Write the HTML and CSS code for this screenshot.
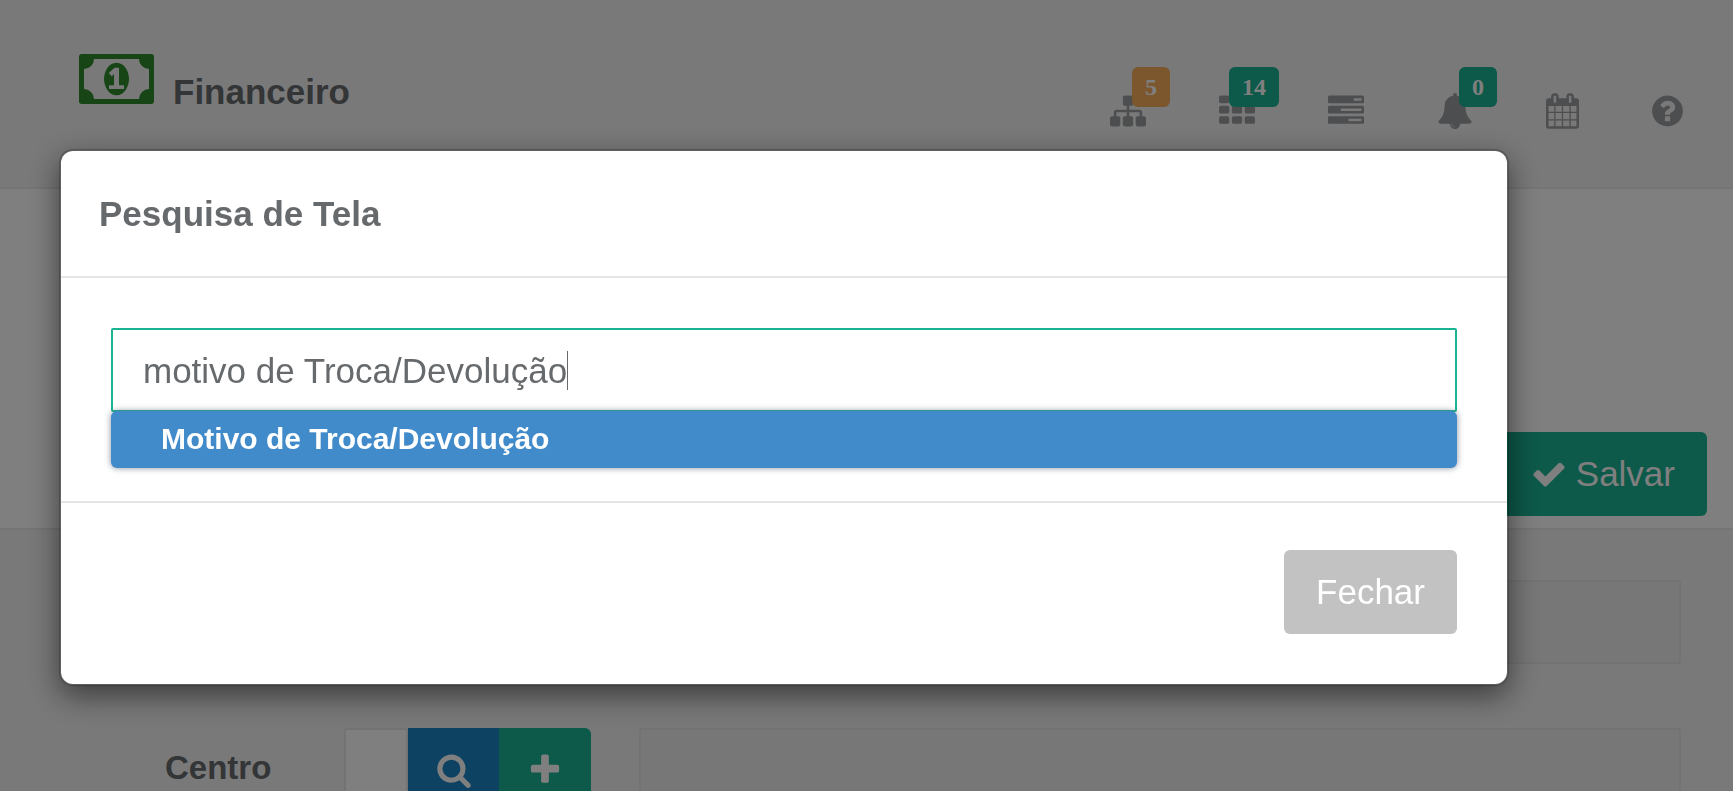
FILE: index.html
```html
<!DOCTYPE html>
<html lang="pt-br">
  <head>
    <meta charset="UTF-8" />
    <meta name="viewport" content="width=device-width, initial-scale=1.0" />
    <title>Financeiro</title>
    <link rel="stylesheet" href="styles.css">
  </head>
  <body>
    <header class="topbar">
      <h1 class="brand">
        <svg class="brand-icon" viewBox="0 256 1920 1280" aria-hidden="true"><path d="M768 1152h384v-96h-128v-448h-114l-148 137 77 80q42-37 55-57h2v288h-128v96zm512-256q0 70-21 142t-59.5 134-101.5 101-138 39-138-39-101.5-101-59.5-134-21-142 21-142 59.5-134 101.5-101 138-39 138 39 101.5 101 59.5 134 21 142zm512 256v-512q-106 0-181-75t-75-181h-1152q0 106-75 181t-181 75v512q106 0 181 75t75 181h1152q0-106 75-181t181-75zm128-832v1152q0 26-19 45t-45 19h-1792q-26 0-45-19t-19-45v-1152q0-26 19-45t45-19h1792q26 0 45 19t19 45z"/></svg>
        Financeiro
      </h1>
      <nav class="top-links">
        <a href="#" aria-label="Estrutura">
          <svg class="icon" viewBox="0 0 1792 1792"><path d="M1792 1248v320q0 40-28 68t-68 28h-320q-40 0-68-28t-28-68v-320q0-40 28-68t68-28h96v-192h-512v192h96q40 0 68 28t28 68v320q0 40-28 68t-68 28h-320q-40 0-68-28t-28-68v-320q0-40 28-68t68-28h96v-192h-512v192h96q40 0 68 28t28 68v320q0 40-28 68t-68 28h-320q-40 0-68-28t-28-68v-320q0-40 28-68t68-28h96v-192q0-52 38-90t90-38h512v-192h-96q-40 0-68-28t-28-68v-320q0-40 28-68t68-28h320q40 0 68 28t28 68v320q0 40-28 68t-68 28h-96v192h512q52 0 90 38t38 90v192h96q40 0 68 28t28 68z"/></svg>
          <span class="badge badge-warning">5</span>
        </a>
        <a href="#" aria-label="Telas">
          <svg class="icon" viewBox="0 0 1792 1792">
            <rect x="0" y="128" width="512" height="384" rx="96"/>
            <rect x="640" y="128" width="512" height="384" rx="96"/>
            <rect x="1280" y="128" width="512" height="384" rx="96"/>
            <rect x="0" y="640" width="512" height="384" rx="96"/>
            <rect x="640" y="640" width="512" height="384" rx="96"/>
            <rect x="1280" y="640" width="512" height="384" rx="96"/>
            <rect x="0" y="1152" width="512" height="384" rx="96"/>
            <rect x="640" y="1152" width="512" height="384" rx="96"/>
            <rect x="1280" y="1152" width="512" height="384" rx="96"/>
          </svg>
          <span class="badge badge-wide">14</span>
        </a>
        <a href="#" aria-label="Tarefas">
          <svg class="icon" viewBox="0 0 1792 1792"><path d="M1024 1408h640v-128h-640v128zm-384-512h1024v-128h-1024v128zm640-512h384v-128h-384v128zm512 832v256q0 26-19 45t-45 19h-1664q-26 0-45-19t-19-45v-256q0-26 19-45t45-19h1664q26 0 45 19t19 45zm0-512v256q0 26-19 45t-45 19h-1664q-26 0-45-19t-19-45v-256q0-26 19-45t45-19h1664q26 0 45 19t19 45zm0-512v256q0 26-19 45t-45 19h-1664q-26 0-45-19t-19-45v-256q0-26 19-45t45-19h1664q26 0 45 19t19 45z"/></svg>
        </a>
        <a href="#" aria-label="Alertas">
          <svg class="icon" viewBox="0 0 1792 1792"><path d="M912 1696q0-16-16-16-59 0-101.5-42.5t-42.5-101.5q0-16-16-16t-16 16q0 73 51.5 124.5t124.5 51.5q16 0 16-16zm816-288q0 52-38 90t-90 38h-448q0 106-75 181t-181 75-181-75-75-181h-448q-52 0-90-38t-38-90q50-42 91-88t85-119.5 74.5-158.5 50-206 19.5-260q0-152 117-282.5t307-158.5q-8-19-8-39 0-40 28-68t68-28 68 28 28 68q0 20-8 39 190 28 307 158.5t117 282.5q0 139 19.5 260t50 206 74.5 158.5 85 119.5 91 88z"/></svg>
          <span class="badge">0</span>
        </a>
        <a href="#" aria-label="Agenda">
          <svg class="icon icon-calendar" viewBox="64 0 1664 1792"><path d="M192 1664h288v-288h-288v288zm352 0h320v-288h-320v288zm-352-352h288v-320h-288v320zm352 0h320v-320h-320v320zm-352-384h288v-288h-288v288zm736 736h320v-288h-320v288zm-384-736h320v-288h-320v288zm768 736h288v-288h-288v288zm-384-352h320v-320h-320v320zm-352-864v-288q0-13-9.5-22.5t-22.5-9.5h-64q-13 0-22.5 9.5t-9.5 22.5v288q0 13 9.5 22.5t22.5 9.5h64q13 0 22.5-9.5t9.5-22.5zm736 864h288v-320h-288v320zm-384-384h320v-288h-320v288zm384 0h288v-288h-288v288zm32-480v-288q0-13-9.5-22.5t-22.5-9.5h-64q-13 0-22.5 9.5t-9.5 22.5v288q0 13 9.5 22.5t22.5 9.5h64q13 0 22.5-9.5t9.5-22.5zm384-64v1280q0 52-38 90t-90 38h-1408q-52 0-90-38t-38-90v-1280q0-52 38-90t90-38h128v-96q0-66 47-113t113-47h64q66 0 113 47t47 113v96h384v-96q0-66 47-113t113-47h64q66 0 113 47t47 113v96h128q52 0 90 38t38 90z"/></svg>
        </a>
        <a href="#" aria-label="Ajuda">
          <svg class="icon icon-help" viewBox="128 0 1536 1792"><path d="M1024 1376v-192q0-14-9-23t-23-9h-192q-14 0-23 9t-9 23v192q0 14 9 23t23 9h192q14 0 23-9t9-23zm256-672q0-88-55.5-163t-138.5-116-170-41q-243 0-371 213-15 24 8 42l132 100q7 6 19 6 16 0 25-12 53-68 86-92 34-24 86-24 48 0 85.5 26t37.5 59q0 38-20 61t-68 45q-63 28-115.5 86.5t-52.5 125.5v36q0 14 9 23t23 9h192q14 0 23-9t9-23q0-19 21.5-49.5t54.5-49.5q32-18 49-28.5t46-35 44.5-48 28-60.5 12.5-81zm384 192q0 209-103 385.5t-279.5 279.5-385.5 103-385.5-103-279.5-279.5-103-385.5 103-385.5 279.5-279.5 385.5-103 385.5 103 279.5 279.5 103 385.5z"/></svg>
        </a>
      </nav>
    </header>

    <div class="page-actions">
      <button type="button" class="btn btn-primary">
        <svg class="icon" viewBox="0 0 1792 1792" aria-hidden="true"><path d="M1671 566q0 40-28 68l-724 724-136 136q-28 28-68 28t-68-28l-136-136-362-362q-28-28-28-68t28-68l136-136q28-28 68-28t68 28l294 295 656-657q28-28 68-28t68 28l136 136q28 28 28 68z"/></svg>
        Salvar
      </button>
    </div>

    <form class="form">
      <div class="form-row">
        <input type="text" class="form-control description" aria-label="Descrição" disabled />
      </div>
      <div class="form-row">
        <label for="centro">Centro</label>
        <div class="input-group">
          <input type="text" id="centro" class="form-control" />
          <button type="button" class="btn btn-success" aria-label="Pesquisar">
            <svg class="icon" viewBox="0 0 1792 1792"><path d="M1216 832q0-185-131.5-316.5t-316.5-131.5-316.5 131.5-131.5 316.5 131.5 316.5 316.5 131.5 316.5-131.5 131.5-316.5zm512 832q0 52-38 90t-90 38q-54 0-90-38l-343-342q-179 124-399 124-143 0-273.5-55.5t-225-150-150-225-55.5-273.5 55.5-273.5 150-225 225-150 273.5-55.5 273.5 55.5 225 150 150 225 55.5 273.5q0 220-124 399l343 343q37 37 37 90z"/></svg>
          </button>
          <button type="button" class="btn btn-primary" aria-label="Adicionar">
            <svg class="icon" viewBox="0 0 1792 1792"><path d="M1600 736v192q0 40-28 68t-68 28h-416v416q0 40-28 68t-68 28h-192q-40 0-68-28t-28-68v-416h-416q-40 0-68-28t-28-68v-192q0-40 28-68t68-28h416v-416q0-40 28-68t68-28h192q40 0 68 28t28 68v416h416q40 0 68 28t28 68z"/></svg>
          </button>
        </div>
        <input type="text" class="form-control description" aria-label="Descrição do centro" disabled />
      </div>
    </form>

    <div class="modal-backdrop">
      <div class="modal" role="dialog" aria-labelledby="modalTitle">
        <div class="modal-header">
          <h2 id="modalTitle">Pesquisa de Tela</h2>
        </div>
        <div class="modal-body">
          <div class="search">
            <input type="text" class="form-control search-input" aria-label="Pesquisa de Tela" value="motivo de Troca/Devolução" />
            <span class="caret"></span>
            <ul class="typeahead">
              <li><a href="#">Motivo de Troca/Devolução</a></li>
            </ul>
          </div>
        </div>
        <div class="modal-footer">
          <button type="button" class="btn btn-default">Fechar</button>
        </div>
      </div>
    </div>
  </body>
</html>
```
FILE: styles.css
```css
* {
  box-sizing: border-box;
}
body {
  margin: 0;
  height: 100vh;
  overflow: hidden;
  background-color: #f3f3f4;
  color: #676a6c;
  font-family: "Liberation Sans", Arial, Helvetica, sans-serif;
  font-size: 35px;
}
h1,
h2 {
  margin: 0;
  font-size: 35px;
  line-height: 40px;
}
.icon {
  display: block;
  width: 36px;
  height: 36px;
  fill: currentColor;
}

/* top bar */
.topbar {
  display: flex;
  justify-content: space-between;
  align-items: flex-start;
  height: 189px;
  padding: 54px 50px 0 79px;
  border-bottom: 2px solid #e7eaec;
}
.brand {
  display: flex;
  align-items: baseline;
  gap: 19px;
}
.brand-icon {
  width: 75px;
  height: 50px;
  fill: #2e8a2c;
}
.top-links {
  display: flex;
  gap: 73px;
  padding-top: 39px;
}
.top-links a {
  position: relative;
  color: #999c9e;
}
.icon-calendar {
  width: 33px;
}
.icon-help {
  width: 31px;
}
.badge {
  position: absolute;
  left: 22px;
  bottom: 22px;
  padding: 0 13px;
  border-radius: 6px;
  background-color: #1ab394;
  color: #fff;
  font-family: "Liberation Serif", "Times New Roman", serif;
  font-size: 24px;
  font-weight: bold;
  line-height: 40px;
}
.badge-wide {
  left: 10px;
}
.badge-warning {
  background-color: #f8ac59;
}

/* buttons */
.btn {
  display: flex;
  align-items: center;
  height: 84px;
  padding: 0 32px;
  border: none;
  border-radius: 6px;
  color: #fff;
  font-family: inherit;
  font-size: 35px;
  cursor: pointer;
}
.btn-primary {
  gap: 9px;
  background-color: #1ab394;
}
.btn-success {
  background-color: #1c84c6;
}
.btn-default {
  background-color: #c2c2c2;
}
.page-actions {
  display: flex;
  justify-content: flex-end;
  align-items: flex-end;
  height: 341px;
  padding: 0 26px 12px;
  border-bottom: 2px solid #e7eaec;
  background-color: #fff;
}

/* form */
.form {
  display: flex;
  flex-direction: column;
  gap: 64px;
  padding: 50px 52px 0 165px;
}
.form-row {
  display: grid;
  grid-template-columns: 131px 247px 1fr;
  column-gap: 48px;
}
.form-row label {
  padding-top: 20px;
  font-size: 33px;
  font-weight: bold;
  line-height: 40px;
}
.form-control {
  width: 100%;
  height: 84px;
  padding: 0 30px;
  border: 2px solid #e5e6e7;
  border-radius: 2px;
  background-color: #fff;
  color: inherit;
  font-family: inherit;
  font-size: 35px;
}
.form-control:disabled {
  background-color: #eee;
}
.description {
  grid-column: 3;
}
.input-group {
  display: flex;
}
.input-group .form-control {
  flex: 1;
  min-width: 0;
}
.input-group .btn {
  justify-content: center;
  width: 91px;
  padding: 0;
  border-radius: 0;
}
.input-group .btn:last-child {
  width: 92px;
  border-radius: 0 6px 6px 0;
}

/* modal */
.modal-backdrop {
  position: fixed;
  inset: 0;
  padding: 149px 224px 0 59px;
  background-color: rgba(0, 0, 0, 0.5);
}
.modal {
  border: 2px solid rgba(0, 0, 0, 0.2);
  border-radius: 14px;
  background-color: #fff;
  background-clip: padding-box;
  box-shadow: 0 10px 30px rgba(0, 0, 0, 0.5);
}
.modal-header {
  padding: 43px 38px 42px;
  border-bottom: 2px solid #e5e5e5;
}
.modal-body {
  padding: 50px 50px 33px;
}
.modal-footer {
  display: flex;
  justify-content: flex-end;
  padding: 47px 50px 50px;
  border-top: 2px solid #e5e5e5;
}
.search {
  position: relative;
}
.search-input {
  display: block;
  padding-top: 2px;
  border-color: #1ab394;
  outline: none;
}
.caret {
  position: absolute;
  top: 23px;
  left: 456px;
  width: 1px;
  height: 39px;
  background-color: #676a6c;
}
.typeahead {
  position: relative;
  margin: -1px 0 0;
  padding: 0;
  border-radius: 6px;
  background-color: #428bca;
  box-shadow: 0 0 6px rgba(86, 96, 117, 0.7);
  list-style: none;
}
.typeahead a {
  display: block;
  padding: 8px 50px 9px;
  color: #fff;
  font-size: 30px;
  font-weight: bold;
  line-height: 40px;
  text-decoration: none;
}
```
